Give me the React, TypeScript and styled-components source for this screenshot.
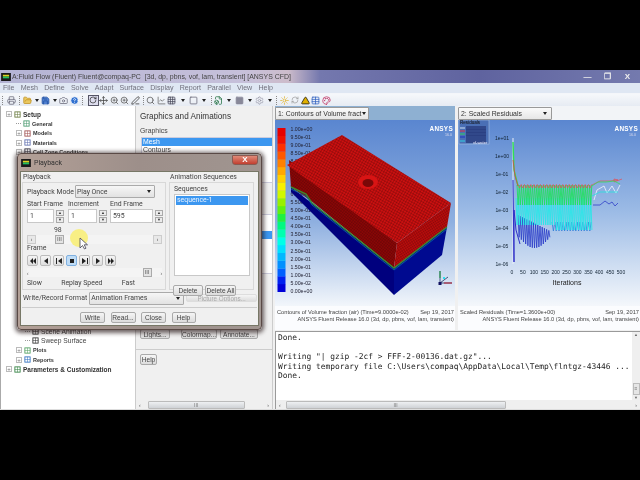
import React from "react";
import styled, { createGlobalStyle } from "styled-components";
import { Camera, ChartLine, CircleHelp, FileBox, FolderOpen, Grid3x3, Move, PenLine, Printer, RefreshCw, RotateCw, Save, Search, Square, Sun, Triangle, ZoomIn, Settings, Table, Palette } from "lucide-react";

const Global = createGlobalStyle`
  html, body { margin: 0; padding: 0; background: #000; width: 640px; height: 480px; overflow: hidden; }
  * { box-sizing: border-box; }
`;
const Stage = styled.div`
  width: 640px; height: 480px; background: #000; padding-top: 70px; position: relative; overflow: hidden;
  font-family: "Liberation Sans", sans-serif; filter: blur(0.35px);
`;
const Win = styled.div`
  width: 640px; height: 340px; background: #f0f0f0; display: flex; flex-direction: column; color: #333;
`;
const TitleBar = styled.div`
  height: 13px; flex: none; display: flex; align-items: center; gap: 1px; padding: 0 3px 0 1px;
  background: linear-gradient(90deg, #b4b4d4 0, #c6c0da 38%, #cdbccb 45%, #7478ae 50%, #5f639f 75%, #747aae 100%);
  color: #444; font-size: 6.95px; white-space: pre;
`;
const AppLogo = styled.svg`width: 10px; height: 8px; flex: none;`;
const TitleText = styled.span`flex: 1;`;
const WinBtn = styled.span`
  width: 19px; height: 10px; color: #eee; display: flex; align-items: center; justify-content: center;
  font-size: 8px; font-weight: 700;
`;
const Menu = styled.div`
  height: 11px; flex: none; background: #dfe7f3; display: flex; align-items: center; gap: 6.2px; padding-left: 3px;
  font-size: 7.1px; color: #70707c; border-bottom: 1px solid #f4f6fa;
`;
const Toolbar = styled.div`
  height: 12px; flex: none; background: linear-gradient(#f6f8fb, #e6ebf3); display: flex; align-items: center;
`;
const Grip = styled.span<{ $w?: number }>`width: ${(p) => p.$w ?? 6}px; height: 9px; flex: none; border-left: 1px dotted #888; transform: translateX(2px);`;
const ToolIcon = styled.span<{ $on?: boolean }>`
  width: 10.5px; height: 11px; flex: none; display: flex; align-items: center; justify-content: center;
  ${(p) => p.$on && "border: 1px solid #556; background: #dde;"}
`;
const Caret = styled.span<{ $w?: number }>`
  width: 0; height: 0; flex: none; margin: 0 ${(p) => ((p.$w ?? 7.5) - 4) / 2}px; border: 2px solid transparent; border-top: 3px solid #222; border-bottom: 0;
`;
const Main = styled.div`flex: 1; min-height: 0; display: flex; border-bottom: 1px solid #ddd;`;
const Tree = styled.div`
  width: 136px; flex: none; background: #fff; border-left: 1px solid #aaa; padding-top: 3.5px; overflow: hidden;
  border-right: 1px solid #ccc;
`;
const Row = styled.div<{ $lvl: number; $big?: boolean }>`
  height: 9.45px; display: flex; align-items: center; gap: 2px; white-space: nowrap;
  padding-left: ${(p) => p.$lvl}px; color: #333;
  font-size: ${(p) => (p.$big ? 6.5 : 5.5)}px; font-weight: 700;
`;
const TreeGap = styled.div`height: 170.1px;`;
const PlainLabel = styled.span`font-weight: 400; font-size: 6.7px; color: #444;`;
const Plus = styled.span`
  width: 6px; height: 6px; flex: none; border: 1px solid #bbb; background: #fff; color: #777; font-size: 6px; line-height: 4px; text-align: center; font-weight: 400;
`;
const Dash = styled.span`width: 5px; flex: none; border-top: 1px dotted #999;`;
const Glyph = styled.svg`width: 7px; height: 7px; flex: none;`;

const Mid = styled.div`
  width: 137px; flex: none; background: #f0f0f0; display: flex; flex-direction: column; border-right: 1px solid #ccc; position: relative; overflow: hidden;
`;
const MidBody = styled.div`flex: 1; padding: 4px 0 0 4px; display: flex; flex-direction: column; font-size: 6.9px; color: #444;`;
const Heading = styled.div`font-size: 8.2px; height: 15px; color: #333; line-height: 13px;`;
const Small = styled.div`height: 12px; line-height: 12px; font-size: 6.9px; color: #444;`;
const ListBox = styled.div<{ $h: number; $mt?: number }>`
  height: ${(p) => p.$h}px; margin-top: ${(p) => p.$mt ?? 0}px; background: #fff; border: 1px solid #ccd; border-right: 0; margin-left: 1px; overflow: hidden; flex: none;
`;
const ListRow = styled.div<{ $on?: boolean; $top?: number }>`
  height: 8.2px; margin-top: ${(p) => p.$top ?? 0}px; line-height: 8px; padding-left: 1px; font-size: 6.9px; color: ${(p) => (p.$on ? "#fff" : "#444")}; background: ${(p) => (p.$on ? "#3c97f0" : "transparent")};
`;
const Btn = styled.button<{ $w?: number; $h?: number; $ghost?: boolean; $ml?: number }>`
  height: ${(p) => p.$h ?? (p.$ghost ? 8 : 11)}px; width: ${(p) => p.$w ?? 25}px; margin-left: ${(p) => p.$ml ?? 0}px; padding: 0; font: inherit; font-family: "Liberation Sans", sans-serif; font-size: ${(p) => (p.$ghost ? 6.3 : 6.6)}px; color: ${(p) => (p.$ghost ? "#aaa" : "#444")};
  border: 1px solid ${(p) => (p.$ghost ? "#ddd" : "#aaa")}; border-radius: 2px; background: linear-gradient(#f5f5f5, #dcdcdc); white-space: nowrap; overflow: hidden; flex: none;
`;
const BtnRow = styled.div<{ $gap?: number; $mt?: number }>`display: flex; gap: ${(p) => p.$gap ?? 2}px; align-items: center; margin-top: ${(p) => p.$mt ?? 0}px;`;
const Rule = styled.div`border-top: 1px solid #ccc; margin: 10px 0 4px -4px;`;
const HBar = styled.div`
  height: 9px; flex: none; background: #efefef; display: flex; align-items: center; justify-content: space-between; padding: 0 3px; font-size: 5px; color: #555;
`;
const HThumb = styled.span<{ $l: number; $w: number }>`
  height: 8px; width: ${(p) => p.$w}px; margin-left: ${(p) => p.$l}px; margin-right: auto; background: linear-gradient(#eef0f2, #cfd2d6); border: 1px solid #bbb; border-radius: 1px;
  color: #777; font-size: 5px; line-height: 6px; text-align: center;
`;

const Right = styled.div`flex: 1; min-width: 0; display: flex; flex-direction: column; padding-left: 2px;`;
const Plots = styled.div`height: 224px; flex: none; display: flex; gap: 3px;`;
const Plot = styled.div<{ $w: number }>`width: ${(p) => p.$w}px; flex: none; display: flex; flex-direction: column; background: #fbfcfe;`;
const TabBar = styled.div<{ $bg: string }>`height: 14px; flex: none; background: ${(p) => p.$bg}; display: flex; align-items: center;`;
const TabSel = styled.div`
  width: 94px; height: 13px; border: 1px solid #999; border-radius: 1px; background: linear-gradient(#fafafa, #e6e6e6); display: flex; align-items: center; justify-content: space-between;
  padding: 0 4px 0 2px; font-size: 6.9px; color: #333; white-space: nowrap; overflow: hidden;
`;
const Art = styled.svg`display: block; width: 100%; height: 186px; flex: none;`;
const Caption = styled.div`
  flex: 1; font-size: 5.7px; line-height: 7px; color: #444; padding: 3px 1px 0 2px; white-space: nowrap;
`;
const CapRow = styled.div<{ $end?: boolean }>`display: flex; justify-content: ${(p) => (p.$end ? "flex-end" : "space-between")};`;
const ConsoleWrap = styled.div`flex: 1; min-height: 0; display: flex; flex-direction: column; border: 1px solid #9a9a9a; border-width: 1px 0 0 1px; margin-top: 1px;`;
const ConsoleInner = styled.div`flex: 1; min-height: 0; display: flex;`;
const ConsoleText = styled.pre`
  flex: 1; margin: 0; padding: 1px 0 0 2px; background: #fff; font: 7.9px/9.55px "DejaVu Sans Mono", monospace; color: #222; overflow: hidden;
`;
const VBar = styled.div`
  width: 8px; flex: none; background: #efefef; display: flex; flex-direction: column; justify-content: space-between; align-items: center; font-size: 4px; color: #666;
`;
const VThumb = styled.span`width: 7px; height: 12px; background: #e6e6e6; border: 1px solid #bbb; margin-top: auto; color: #777; font-size: 5px; line-height: 8px; text-align: center;`;

const Dialog = styled.div`
  position: absolute; left: 17px; top: 153px; width: 245px; height: 177px; padding: 0 2px 3px; display: flex; flex-direction: column;
  background: linear-gradient(90deg, #b3a097, #9d8f8a 50%, #a09590); border: 1px solid #5a4a46; border-radius: 4px; box-shadow: 0 1px 4px 2px rgba(30,15,15,.65);
  font-family: Roboto, sans-serif; font-size: 6.9px; color: #444;
`;
const DlgTitle = styled.div`height: 17px; flex: none; display: flex; align-items: center; gap: 3px; padding-left: 1px; font-size: 7px; color: #333;`;
const DlgClose = styled.span`
  width: 26px; height: 10px; margin: -6px 1px 0 auto; background: linear-gradient(#e08a78, #c23f30); border: 1px solid #8a5a52; border-radius: 0 0 3px 3px; color: #fff;
  font: 700 8px/8px "Liberation Sans", sans-serif; text-align: center;
`;
const Face = styled.div`flex: 1; background: #f0f0f0; padding: 1px 1px 0; display: flex; flex-direction: column; border: 1px solid #776;`;
const Columns = styled.div`display: flex; gap: 3px; height: 117px; flex: none;`;
const Group = styled.div`flex: none; display: flex; flex-direction: column;`;
const GroupTitle = styled.div`height: 9px; line-height: 9px; padding-left: 1px;`;
const GroupBox = styled.div<{ $w: number; $h: number }>`
  width: ${(p) => p.$w}px; height: ${(p) => p.$h}px; border: 1px solid #d8d8d8; padding: 2px 3px 2px 4px; display: flex; flex-direction: column; position: relative;
`;
const FieldRow = styled.div`display: flex; align-items: center; gap: 1px; height: 13px; white-space: nowrap;`;
const Combo = styled.div<{ $w: number }>`
  width: ${(p) => p.$w}px; height: 13px; flex: none; border: 1px solid #aaa; border-radius: 1px; background: linear-gradient(#f6f6f6, #e2e2e2); display: flex; align-items: center; justify-content: space-between;
  padding: 0 3px 0 1px; white-space: nowrap;
`;
const Triangle2 = styled.span`width: 0; height: 0; border: 2.5px solid transparent; border-top: 3px solid #222; border-bottom: 0;`;
const LabelGrid = styled.div`display: grid; grid-template-columns: 41px 42px 1fr; height: 9px; margin-top: 2px; line-height: 9px; white-space: nowrap;`;
const SpinRow = styled.div`display: grid; grid-template-columns: 41px 42px 1fr; height: 14px;`;
const SpinCell = styled.div`display: flex; gap: 2px; align-items: center;`;
const Input = styled.div<{ $w: number }>`
  width: ${(p) => p.$w}px; height: 14px; background: #fff; border: 1px solid #c8c8c8; line-height: 10px; padding: 1px 2px; flex: none;
`;
const Spin = styled.div`width: 8px; flex: none; display: flex; flex-direction: column; gap: 1px;`;
const SpinBtn = styled.span`
  height: 6px; border: 1px solid #aaa; background: #ececec; color: #333; font-size: 4px; line-height: 4px; text-align: center; display: block;
`;
const Value = styled.div`height: 9px; line-height: 9px; padding-left: 27px; margin-top: 3px;`;
const Slider = styled.div<{ $mt?: number }>`height: 9px; margin-top: ${(p) => p.$mt ?? 0}px; display: flex; align-items: center; justify-content: space-between; background: #f4f4f4; font-size: 5px; color: #333; flex: none;`;
const SlideEnd = styled.span`width: 9px; height: 9px; border: 1px solid #ccc; background: #e8e8e8; text-align: center; line-height: 7px; font-size: 5px;`;
const SlideThumb = styled.span<{ $l: number }>`
  width: 9px; height: 9px; margin-left: ${(p) => p.$l}px; margin-right: auto; border: 1px solid #aaa; background: #e4e4e4; color: #666; text-align: center; line-height: 6px; font-size: 6px;
`;
const FrameLabel = styled.div`height: 9px; line-height: 9px; flex: none;`;
const Players = styled.div`display: flex; gap: 2px; margin-top: 2px; height: 11px; flex: none;`;
const Player = styled.span<{ $on?: boolean }>`
  width: 11px; height: 11px; flex: none; border: 1px solid ${(p) => (p.$on ? "#7fb0e0" : "#bbb")}; border-radius: 2px; background: ${(p) => (p.$on ? "#bfdcf6" : "linear-gradient(#f4f4f4,#dedede)")};
  display: flex; align-items: center; justify-content: center;
`;
const PlayerGlyph = styled.svg`width: 8px; height: 6px; fill: #222;`;
const Spread = styled.div`display: flex; justify-content: space-between; height: 9px; line-height: 9px; margin-top: 2px; padding-right: 27px; flex: none;`;
const SeqLabel = styled.div`height: 9px; line-height: 9px; flex: none;`;
const SeqList = styled.div`height: 82px; background: #fff; border: 1px solid #c8c8c8; flex: none;`;
const SeqRow = styled.div`height: 9px; margin: 1px; padding-left: 1px; background: #3c97f0; color: #e8f2ff; line-height: 8px;`;
const Floating = styled(BtnRow)`position: absolute; left: 3px; top: 102px; z-index: 2;`;
const FormatRow = styled.div`display: flex; align-items: center; gap: 2px; height: 14px; margin-top: 1px; padding-left: 1px; white-space: nowrap; flex: none;`;
const Divider = styled.div`border-top: 1px solid #ccc; margin-top: 2px; flex: none;`;
const Actions = styled(BtnRow)`margin: 4px 0 0 58px;`;
const Halo = styled.span`
  position: absolute; left: 70px; top: 229px; width: 18px; height: 18px; border-radius: 50%; background: rgba(248, 238, 120, .9); z-index: 5;
`;
const Pointer = styled.svg`position: absolute; left: 79px; top: 237px; width: 9px; height: 13px; z-index: 6;`;

function TreeIcon({ c }: { c: string }) {
  return <Glyph viewBox="0 0 8 8"><rect x="1" y="1" width="6" height="6" fill="none" stroke={c} /><path d="M1 4h6M4 1v6" stroke={c} strokeWidth=".6" /></Glyph>;
}
const topRows: [string, number, "plus" | "dash", string, boolean?][] = [
  ["Setup", 5, "plus", "#6a7a40", true],
  ["General", 15, "dash", "#4a9a70"],
  ["Models", 15, "plus", "#a05050"],
  ["Materials", 15, "plus", "#6070b0"],
  ["Cell Zone Conditions", 15, "plus", "#334"],
];

const legendColors = ["#0000d8","#0020f0","#0060ff","#0090ff","#00b8ff","#00e0ff","#00ffe8","#00ffb0","#00f880","#20f040","#60f010","#98f000","#d0f800","#f8f000","#ffd000","#ffa800","#ff8000","#ff5800","#ff3000","#f01000","#e80000"];
const legendLabels = ["1.00e+00","9.50e-01","9.00e-01","8.50e-01","8.00e-01","7.50e-01","7.00e-01","6.50e-01","6.00e-01","5.50e-01","5.00e-01","4.50e-01","4.00e-01","3.50e-01","3.00e-01","2.50e-01","2.00e-01","1.50e-01","1.00e-01","5.00e-02","0.00e+00"];

function Contours() {
  return (
    <Art viewBox="275 120 180 186" preserveAspectRatio="none">
      <defs>
        <linearGradient id="bg1" x1="0" y1="0" x2="0" y2="1"><stop offset="0" stopColor="#5a86d0" /><stop offset=".55" stopColor="#8fb0e0" /><stop offset="1" stopColor="#f2f6fb" /></linearGradient>
        <pattern id="m1" width="2.6" height="2.6" patternUnits="userSpaceOnUse" patternTransform="rotate(29)"><rect width="2.6" height="2.6" fill="#cc1010" /><path d="M0 0H2.6M0 0V2.6" stroke="#6a0606" strokeWidth=".7" /></pattern>
        <pattern id="m2" width="2.2" height="2.2" patternUnits="userSpaceOnUse" patternTransform="rotate(38)"><rect width="2.2" height="2.2" fill="#8a0606" /><path d="M0 0H2.2M0 0V2.2" stroke="#500404" strokeWidth=".5" /></pattern>
        <pattern id="m3" width="2.2" height="2.2" patternUnits="userSpaceOnUse" patternTransform="rotate(-33)"><rect width="2.2" height="2.2" fill="#b80c0c" /><path d="M0 0H2.2M0 0V2.2" stroke="#700606" strokeWidth=".6" /></pattern>
      </defs>
      <rect x="275" y="120" width="180" height="186" fill="url(#bg1)" />
      {legendColors.map((c, i) => <rect key={c} x="277.5" y={284 - i * 7.8} width="8" height="8" fill={c} />)}
      {legendLabels.map((t, i) => <text key={t} x="290.5" y={131 + i * 8.1} fontSize="5.2" fill="#223" fontFamily="Liberation Sans">{t}</text>)}
      <text x="453" y="131" textAnchor="end" fontSize="6.4" fontWeight="700" fill="#fff" fontFamily="Liberation Sans" letterSpacing=".3">ANSYS</text>
      <text x="452" y="136" textAnchor="end" fontSize="3.6" fill="#dde" fontFamily="Liberation Sans">16.0</text>
      <polygon points="291,187 394,268 394,295 291,192" fill="#00007e" />
      <polygon points="394,268 447,227 442,255 394,295" fill="#000a90" />
      <polygon points="289,160 397,243 394,268 310,200 291,187" fill="url(#m2)" />
      <polygon points="397,243 451,203 447,227 394,268" fill="url(#m3)" />
      <polyline points="291,187 306,194 312,203 394,268 447,227" fill="none" stroke="#3a8a30" strokeWidth="1.4" />
      <polyline points="291,189 306,196 312,205 394,270 447,229" fill="none" stroke="#0a70a0" strokeWidth=".8" />
      <polygon points="342,135 287,165 397,243 451,203" fill="url(#m1)" />
      <ellipse cx="368" cy="182" rx="10" ry="7" fill="#d81414" />
      <ellipse cx="368" cy="183" rx="5.5" ry="4" fill="#7a0808" />
      <path d="M440 283V271M440 283H452M440 283l8-6" stroke="#203060" strokeWidth=".8" fill="none" />
      <path d="M440 278V271" stroke="#20a040" strokeWidth="1" />
      <path d="M444 283H452" stroke="#c02030" strokeWidth="1" />
      <rect x="443" y="277" width="2" height="2" fill="#30e0f0" />
      <rect x="438.5" y="282" width="3" height="3" fill="#101060" />
    </Art>
  );
}

function zig(a: number, b: number, step: number, top: (x: number) => number, bot: (x: number) => number) {
  const out: string[] = [];
  let flip = false;
  for (let x = a; x <= b; x += step) {
    out.push(`${x.toFixed(1)},${(flip ? bot(x) : top(x)).toFixed(1)}`);
    flip = !flip;
  }
  return out.join(" ");
}
const yTicks = ["1e+01","1e+00","1e-01","1e-02","1e-03","1e-04","1e-05","1e-06"];
const xTicks = [0,50,100,150,200,250,300,350,400,450,500];

function Residuals() {
  return (
    <Art viewBox="458 120 182 186" preserveAspectRatio="none">
      <defs><linearGradient id="bg2" x1="0" y1="0" x2="0" y2="1"><stop offset="0" stopColor="#5a86d0" /><stop offset=".5" stopColor="#9dbce6" /><stop offset="1" stopColor="#f4f7fb" /></linearGradient></defs>
      <rect x="458" y="120" width="182" height="186" fill="url(#bg2)" />
      <rect x="459" y="120" width="30" height="24" fill="#4a6fb5" stroke="#a8c0e0" strokeWidth=".6" />
      <text x="460" y="124" fontSize="4.6" fill="#111" fontFamily="Liberation Sans">Residuals</text>
      {[["#d0e0f0",128],["#e03040",131],["#30d060",134],["#2030c0",137],["#30d0e0",141]].map(([c,y]) => <g key={String(y)}><path d={`M460 ${y}h5`} stroke={String(c)} /><rect x="466" y={Number(y) - 2} width="20" height="4" fill="#2a3f80" opacity=".8" /></g>)}
      <text x="473" y="143.500" fontSize="4" fill="#eef" fontFamily="Liberation Sans">vf-water</text>
      <text x="638" y="131" textAnchor="end" fontSize="6.4" fontWeight="700" fill="#fff" fontFamily="Liberation Sans" letterSpacing=".3">ANSYS</text>
      <text x="636" y="136" textAnchor="end" fontSize="3.6" fill="#dde" fontFamily="Liberation Sans">16.0</text>
      {yTicks.map((t, i) => <text key={t} x="502" y={140 + i * 18} textAnchor="middle" fontSize="5" fill="#123" fontFamily="Liberation Sans">{t}</text>)}
      {xTicks.map((t, i) => <text key={t} x={512 + i * 10.9} y="274" textAnchor="middle" fontSize="5" fill="#123" fontFamily="Liberation Sans">{t}</text>)}
      <text x="567" y="285" textAnchor="middle" fontSize="7" fill="#222" fontFamily="Liberation Sans">Iterations</text>
      <path d="M513 138V264" stroke="#e8eef8" strokeWidth="1" />
      <polyline points="513,180 514,262 514,210 516,230 520,244" fill="none" stroke="#3030c8" strokeWidth="1" />
      <polyline points={zig(518, 551, 1.1, (x) => 215 + (x - 518) * .5, (x) => 236 + 12 * Math.sin(((x - 518) / 33) * 3.14))} fill="none" stroke="#2a3ac8" strokeWidth=".8" />
      <polyline points={zig(552, 592, 1.4, () => 222, () => 231)} fill="none" stroke="#3080d8" strokeWidth=".8" />
      <polyline points={zig(516, 592, 1.1, () => 198, (x) => (x < 555 ? 225 : 230))} fill="none" stroke="#28e8e8" strokeWidth=".9" />
      <polyline points={zig(517, 592, 1.1, () => 185, () => 205)} fill="none" stroke="#20e060" strokeWidth=".9" />
      <polyline points={zig(518, 592, 1.6, () => 184.5, () => 188)} fill="none" stroke="#e84a50" strokeWidth=".7" />
      <polyline points="513,142 514,170 516,178 518,186" fill="none" stroke="#30e050" strokeWidth="1.4" />
      <polyline points="513,160 515,176 518,186" fill="none" stroke="#e04040" strokeWidth=".8" />
      <polyline points="592,185 600,181 610,181 618,180 614,179 614,182 622,179" fill="none" stroke="#e84a50" strokeWidth=".7" />
      <polyline points="592,186 598,182 606,182 614,181 620,184" fill="none" stroke="#30e060" strokeWidth=".8" />
      <polyline points="594,200 597,190 604,186 607,193 612,186 616,193 620,185" fill="none" stroke="#f0f4fc" strokeWidth=".8" />
      <polyline points="592,196 600,192 618,192" fill="none" stroke="#30e0e0" strokeWidth=".9" />
      <polyline points="593,205 600,205 605,201 609,204 612,202 615,206 618,203" fill="none" stroke="#3040c8" strokeWidth=".8" />
    </Art>
  );
}

const tools: (React.ReactNode)[] = [
  <Grip key="g0" />, <ToolIcon key="a"><Printer size={9} color="#667" /></ToolIcon>, <Grip key="g1" />,
  <ToolIcon key="b"><FolderOpen size={9} color="#c09020" fill="#eac860" /></ToolIcon>, <Caret key="b2" />,
  <ToolIcon key="c"><Save size={9} color="#2050a0" fill="#5080d0" /></ToolIcon>, <Caret key="c2" />,
  <ToolIcon key="d"><Camera size={9} color="#667" /></ToolIcon>, <ToolIcon key="e"><CircleHelp size={9} color="#fff" fill="#3070d0" /></ToolIcon>, <Grip key="g2" $w={8.5} />,
  <ToolIcon key="f" $on><RotateCw size={8} color="#222" /></ToolIcon>, <ToolIcon key="h"><Move size={9} color="#444" /></ToolIcon>,
  <ToolIcon key="i"><ZoomIn size={9} color="#555" /></ToolIcon>, <ToolIcon key="j"><ZoomIn size={9} color="#555" /></ToolIcon>, <ToolIcon key="k"><PenLine size={9} color="#333" /></ToolIcon>, <Grip key="g3" $w={5} />,
  <ToolIcon key="l"><Search size={9} color="#555" /></ToolIcon>, <ToolIcon key="m"><ChartLine size={9} color="#666" /></ToolIcon>, <ToolIcon key="n"><Grid3x3 size={9} color="#445" /></ToolIcon>, <Caret key="n2" $w={11} />,
  <ToolIcon key="o"><Square size={9} color="#667" /></ToolIcon>, <Caret key="o2" $w={10} />, <Grip key="g4" $w={5} />,
  <ToolIcon key="p"><FileBox size={9} color="#207040" /></ToolIcon>, <Caret key="p2" $w={10} />,
  <ToolIcon key="q"><Square size={9} color="#889" fill="#889" /></ToolIcon>, <Caret key="q2" $w={10} />,
  <ToolIcon key="r"><Settings size={9} color="#99a" /></ToolIcon>, <Caret key="r2" $w={9} />, <Grip key="g5" $w={5} />,
  <ToolIcon key="s"><Sun size={9} color="#e0b020" /></ToolIcon>, <ToolIcon key="t"><RefreshCw size={8} color="#999" /></ToolIcon>,
  <ToolIcon key="u"><Triangle size={9} color="#111" fill="#e0b000" /></ToolIcon>, <ToolIcon key="v"><Table size={9} color="#3060c0" /></ToolIcon>, <ToolIcon key="w"><Palette size={9} color="#c03060" /></ToolIcon>,
];

const players = ["M1 3l3-3v6zM4 3l3-3v6z", "M2 3l4-3v6z", "M1 0h1v6H1zM3 3l4-3v6z", "M2 1h4v4H2z", "M1 0l4 3-4 3zM6 0h1v6H6z", "M2 0l4 3-4 3z", "M1 0l3 3-3 3zM4 0l3 3-3 3z"];

export default function App() {
  return (
    <Stage>
      <Global />
      <Win>
        <TitleBar>
          <AppLogo viewBox="0 0 11 9"><rect width="11" height="9" fill="#1a1a1a" /><rect x="2" y="2" width="7" height="2" fill="#e0d020" /><rect x="2" y="4" width="7" height="2" fill="#20c060" /></AppLogo>
          <TitleText>A:Fluid Flow (Fluent) Fluent@compaq-PC  [3d, dp, pbns, vof, lam, transient] [ANSYS CFD]</TitleText>
          <WinBtn>—</WinBtn><WinBtn>❐</WinBtn><WinBtn>X</WinBtn>
        </TitleBar>
        <Menu>{["File","Mesh","Define","Solve","Adapt","Surface","Display","Report","Parallel","View","Help"].map((m) => <span key={m}>{m}</span>)}</Menu>
        <Toolbar>{tools}</Toolbar>
        <Main>
          <Tree>
            {topRows.map(([t, l, k, c, big]) => (
              <Row key={t} $lvl={l} $big={big}>
                {k === "plus" ? <Plus>+</Plus> : <Dash />}
                <TreeIcon c={c} />{t}
              </Row>
            ))}
            <TreeGap />
            <Row $lvl={24}><Dash /><TreeIcon c="#333" /><PlainLabel>Scene Animation</PlainLabel></Row>
            <Row $lvl={24}><Dash /><TreeIcon c="#333" /><PlainLabel>Sweep Surface</PlainLabel></Row>
            <Row $lvl={15}><Plus>+</Plus><TreeIcon c="#50a060" />Plots</Row>
            <Row $lvl={15}><Plus>+</Plus><TreeIcon c="#3070c0" />Reports</Row>
            <Row $lvl={5} $big><Plus>+</Plus><TreeIcon c="#308040" />Parameters &amp; Customization</Row>
          </Tree>
          <Mid>
            <MidBody>
              <Heading>Graphics and Animations</Heading>
              <Small>Graphics</Small>
              <ListBox $h={46}>
                <ListRow $on>Mesh</ListRow><ListRow>Contours</ListRow>
              </ListBox>
              <ListBox $h={60} $mt={31}>
                <ListRow $on $top={16}> </ListRow>
              </ListBox>
              <BtnRow $gap={3} $mt={55}><Btn $w={30} $h={10}>Lights...</Btn><Btn $w={36} $h={10} $ml={8}>Colormap...</Btn><Btn $w={38} $h={10}>Annotate...</Btn></BtnRow>
              <Rule />
              <BtnRow><Btn $w={17}>Help</Btn></BtnRow>
            </MidBody>
            <HBar>‹<HThumb $l={7} $w={97}>III</HThumb>›</HBar>
          </Mid>
          <Right>
            <Plots>
              <Plot $w={180}>
                <TabBar $bg="#8eb0d2"><TabSel>1: Contours of Volume fract<Triangle2 /></TabSel></TabBar>
                <Contours />
                <Caption>
                  <CapRow><span>Contours of Volume fraction (air)   (Time=9.0000e-02)</span><span>Sep 19, 2017</span></CapRow>
                  <CapRow $end>ANSYS Fluent Release 16.0 (3d, dp, pbns, vof, lam, transient)</CapRow>
                </Caption>
              </Plot>
              <Plot $w={182}>
                <TabBar $bg="#f2f4f7"><TabSel>2: Scaled Residuals<Triangle2 /></TabSel></TabBar>
                <Residuals />
                <Caption>
                  <CapRow><span>Scaled Residuals  (Time=1.3600e+00)</span><span>Sep 19, 2017</span></CapRow>
                  <CapRow $end>ANSYS Fluent Release 16.0 (3d, dp, pbns, vof, lam, transient)</CapRow>
                </Caption>
              </Plot>
            </Plots>
            <ConsoleWrap>
              <ConsoleInner>
                <ConsoleText>{`Done.

Writing "| gzip -2cf > FFF-2-00136.dat.gz"...
Writing temporary file C:\\Users\\compaq\\AppData\\Local\\Temp\\flntgz-43446 ...
Done.`}</ConsoleText>
                <VBar><span>▲</span><VThumb>≡</VThumb><span>▼</span></VBar>
              </ConsoleInner>
              <HBar>‹<HThumb $l={5} $w={220}>III</HThumb>›</HBar>
            </ConsoleWrap>
          </Right>
        </Main>
      </Win>
      <Dialog>
        <DlgTitle>
          <AppLogo viewBox="0 0 11 9"><rect width="11" height="9" fill="#1a1a1a" /><rect x="2" y="2" width="7" height="2" fill="#e0d020" /><rect x="2" y="4" width="7" height="2" fill="#20c060" /></AppLogo>
          Playback<DlgClose>X</DlgClose>
        </DlgTitle>
        <Face>
          <Columns>
            <Group>
              <GroupTitle>Playback</GroupTitle>
              <GroupBox $w={144} $h={108}>
                <FieldRow>Playback Mode<Combo $w={80}>Play Once<Triangle2 /></Combo></FieldRow>
                <LabelGrid><span>Start Frame</span><span>Increment</span><span>End Frame</span></LabelGrid>
                <SpinRow>
                  <SpinCell><Input $w={27}>1</Input><Spin><SpinBtn>▲</SpinBtn><SpinBtn>▼</SpinBtn></Spin></SpinCell>
                  <SpinCell><Input $w={29}>1</Input><Spin><SpinBtn>▲</SpinBtn><SpinBtn>▼</SpinBtn></Spin></SpinCell>
                  <SpinCell><Input $w={43}>595</Input><Spin><SpinBtn>▲</SpinBtn><SpinBtn>▼</SpinBtn></Spin></SpinCell>
                </SpinRow>
                <Value>98</Value>
                <Slider><SlideEnd>‹</SlideEnd><SlideThumb $l={19}>III</SlideThumb><SlideEnd>›</SlideEnd></Slider>
                <FrameLabel>Frame</FrameLabel>
                <Players>{players.map((d, i) => <Player key={d} $on={i === 3}><PlayerGlyph viewBox="0 0 8 6"><path d={d} /></PlayerGlyph></Player>)}</Players>
                <Slider $mt={2}><span>‹</span><SlideThumb $l={114}>III</SlideThumb><span>›</span></Slider>
                <Spread><span>Slow</span><span>Replay Speed</span><span>Fast</span></Spread>
              </GroupBox>
            </Group>
            <Group>
              <GroupTitle>Animation Sequences</GroupTitle>
              <GroupBox $w={85} $h={108}>
                <SeqLabel>Sequences</SeqLabel>
                <SeqList><SeqRow>sequence-1</SeqRow></SeqList>
                <Floating $gap={2}><Btn $w={30}>Delete</Btn><Btn $w={31}>Delete All</Btn></Floating>
              </GroupBox>
            </Group>
          </Columns>
          <FormatRow>Write/Record Format<Combo $w={95}>Animation Frames<Triangle2 /></Combo><Btn $w={71} $ghost>Picture Options...</Btn></FormatRow>
          <Divider />
          <Actions $gap={5.5}><Btn $w={25}>Write</Btn><Btn $w={25}>Read...</Btn><Btn $w={25}>Close</Btn><Btn $w={24}>Help</Btn></Actions>
        </Face>
      </Dialog>
      <Halo />
      <Pointer viewBox="0 0 9 13"><path d="M1 1v10l2.5-2.5L5.5 12l1.5-.8L5.2 7.8H8.5z" fill="#fff" stroke="#445" strokeWidth=".8" /></Pointer>
    </Stage>
  );
}
